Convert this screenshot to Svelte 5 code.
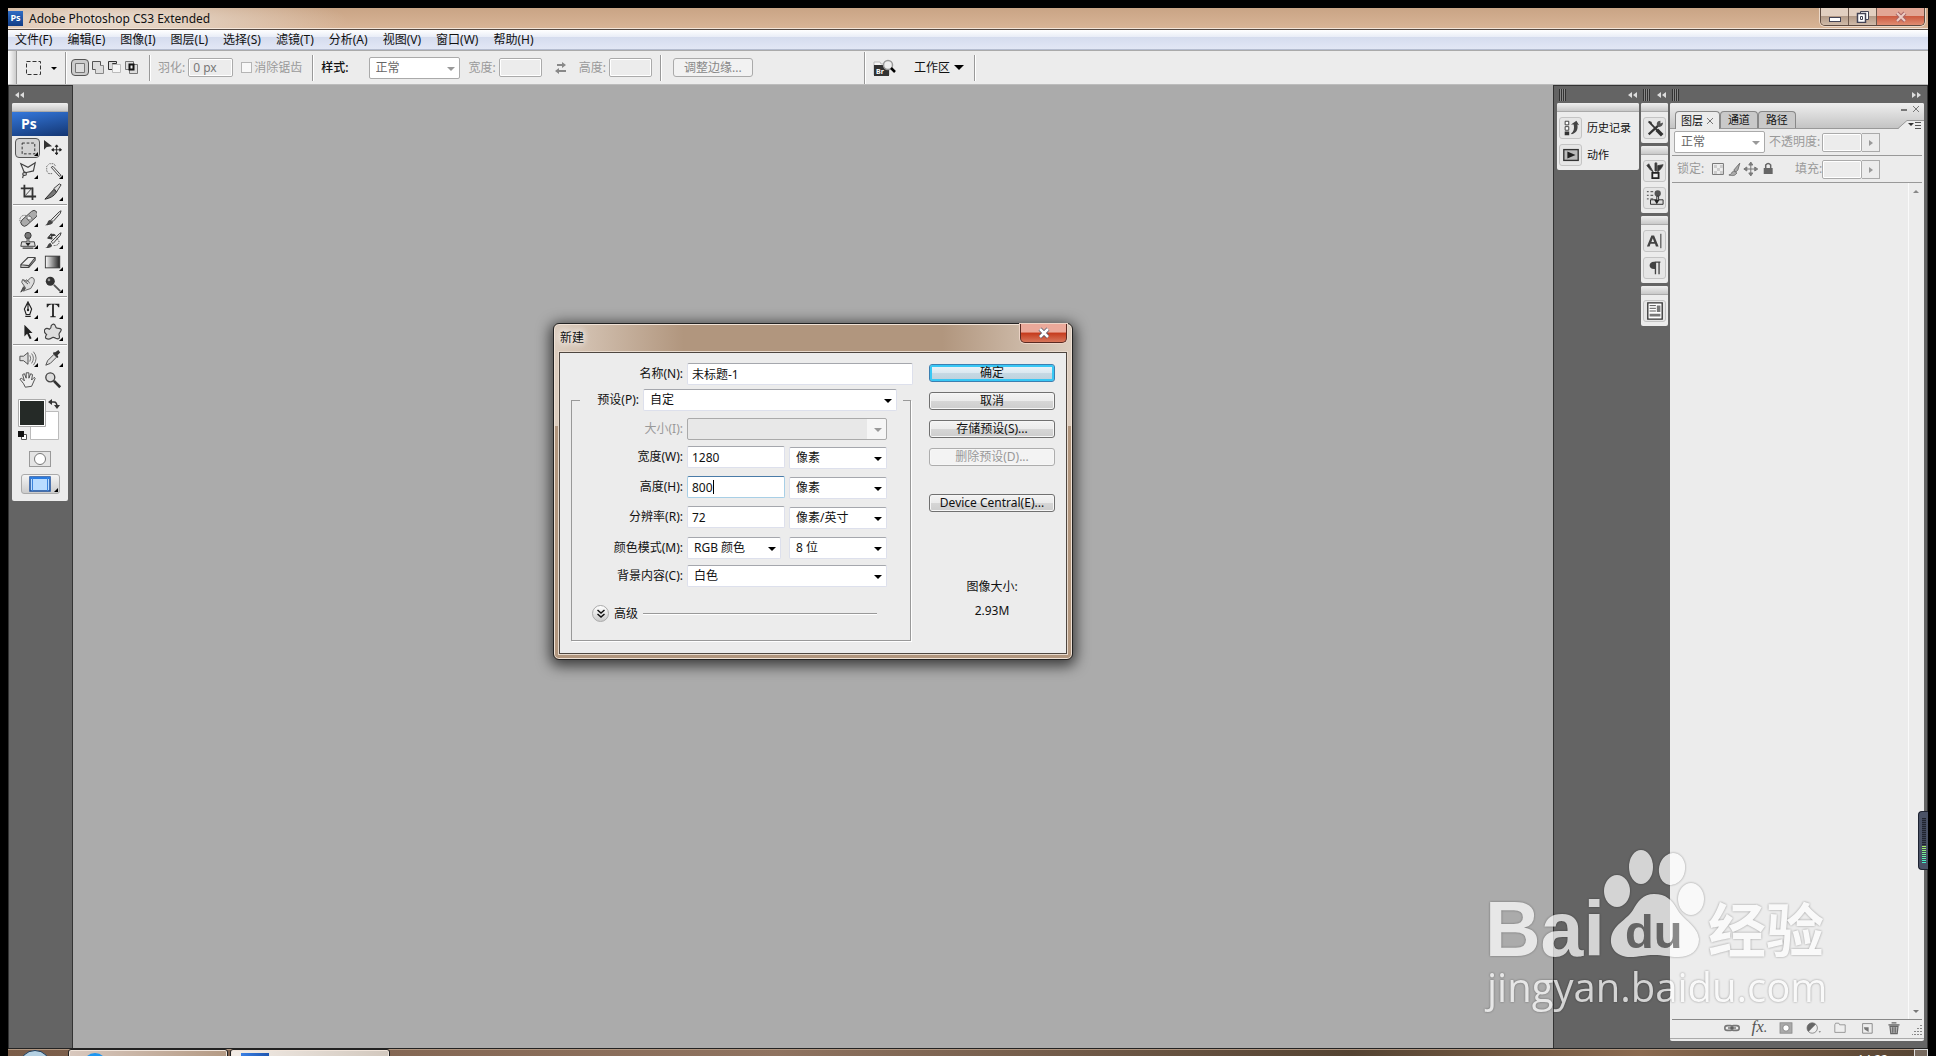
<script lang="ts">
	const menus = ['文件(F)', '编辑(E)', '图像(I)', '图层(L)', '选择(S)', '滤镜(T)', '分析(A)', '视图(V)', '窗口(W)', '帮助(H)'];

	// each group is drawn as rows of two, with a rule between groups
	const toolGroups: string[][] = [
		['marquee', 'move', 'lasso', 'wand', 'crop', 'slice'],
		['heal', 'brush', 'stamp', 'history', 'eraser', 'gradient', 'smudge', 'dodge'],
		['pen', 'type', 'select', 'shape'],
		['audio', 'eyedropper', 'hand', 'zoom']
	];
	const plain = ['move', 'crop', 'hand', 'zoom'];
	const stripGroups: string[][] = [['presets'], ['brushes', 'clone'], ['character', 'paragraph'], ['comps']];
	const footerTools = ['link', 'fx', 'mask', 'adjust', 'folder', 'newlayer', 'trash'];

	let docName = $state('未标题-1');
	let width = $state('1280');
	let height = $state('800');
	let resolution = $state('72');

	const icons: Record<string, string> = {
		marquee: '<rect x="3.5" y="4.5" width="14" height="12" fill="none" stroke="#222" stroke-dasharray="3 2"/>',
		move: '<path d="M0 1v11l3-3 6-1z" fill="#333"/><path d="M14 7v10M9 12h10M12.500 8.500l1.500-2 1.500 2zM12.500 15.500l1.500 2 1.500-2zM10.500 10.500l-2 1.500 2 1.500zM17.500 10.500l2 1.500-2 1.500z" stroke="#222" fill="#222"/>',
		lasso: '<path d="M6 13L2 3l8 4 8-5-2 9-9 2c-3-1-4 3-1 3s3-3 0-4M5 15l-1 4" fill="none" stroke="#444" stroke-width="1.300"/>',
		wand: '<path d="M9 14H5l-2-3V6l3-3h5l2 3" fill="none" stroke="#444" stroke-dasharray="1 1"/><path d="M8 7l9 10 2-1-9-10z" fill="#eee" stroke="#333"/>',
		crop: '<path d="M6 2v13h13M2 6h13v13" fill="none" stroke="#333" stroke-width="2"/><path d="M7 14l8-9" stroke="#444"/>',
		slice: '<path d="M1 18L11 7l3 3c-3 5-8 7-13 8z" fill="#777" stroke="#222"/><path d="M11 6l6-5 2 1-5 8z" fill="#ddd" stroke="#333"/>',
		heal: '<circle cx="6" cy="12" r="5" fill="none" stroke="#444" stroke-dasharray="1 1"/><rect x="0" y="6.500" width="22" height="8" rx="4" transform="rotate(-42 11 10)" fill="#aaa" stroke="#444"/><path d="M8 10l4 4M11 7l4 4" stroke="#555"/><path d="M10 10h3" stroke="#eee" stroke-width="2"/>',
		brush: '<path d="M1 18c4-1 2-5 6-6l3 3c-2 3-5 3-9 3z" fill="#444"/><path d="M8 12l9-9 2-1-1 3-8 9z" fill="#ddd" stroke="#333"/>',
		stamp: '<circle cx="10" cy="5" r="3.500" fill="#777" stroke="#333"/><path d="M9 8h2v4h6l1 5H2l1-5h6z" fill="#ddd" stroke="#333"/><path d="M7 13h6l-3 4z" fill="#222"/><path d="M4 19h12" stroke="#333" stroke-width="1.500"/>',
		history: '<path d="M1 19c4-1 2-4 6-6l2 3c-1 3-5 3-8 3z" fill="#444"/><path d="M8 12l9-9 2-1-1 3-8 9z" fill="#ddd" stroke="#333"/><path d="M5 7c3-4 6-4 8-2M8 3L4 8l5 1z" stroke="#333" fill="#333"/><path d="M14 8c6 5 1 9-4 8" fill="none" stroke="#333" stroke-dasharray="1 1"/>',
		eraser: '<path d="M2 13l8-8h8l-7 9zM2 13v3h9l7-8V5M11 14v2" fill="#eee" stroke="#444" stroke-width="1.200" stroke-linejoin="round"/>',
		gradient: '<defs><linearGradient id="tool-gradient"><stop offset="0" stop-color="#fff"/><stop offset="1" stop-color="#222"/></linearGradient></defs><rect x="1.500" y="3.500" width="16" height="13" fill="url(#tool-gradient)" stroke="#333"/>',
		smudge: '<path d="M5 18l2-4-4-6 1-3 5 2 4-4c4-1 5 3 3 7l-3 5-6 2z" fill="#ddd" stroke="#555"/><path d="M2 19l3-6 2 2zM5 6l5 4M8 5l4 4" stroke="#444" fill="#555"/>',
		dodge: '<circle cx="7" cy="7" r="5" fill="#333"/><circle cx="5.500" cy="5.500" r="1.500" fill="#999"/><path d="M11 11l7 7" stroke="#555" stroke-width="2"/>',
		pen: '<path d="M10 1l4 8-2 6H8L6 9zM7 17h6M10 3v7" fill="#eee" stroke="#222" stroke-width="1.300"/><circle cx="10" cy="10" r="1.300" fill="#222"/>',
		type: '<path d="M3 3h14v4h-1q-1-3-4-3h-1v12q0 1 2 1v1H7v-1q2 0 2-1V4H8Q5 4 4 7H3z" fill="#222"/>',
		select: '<path d="M6 2v13l3-3 3 6 2-1-3-6h4z" fill="#222"/>',
		shape: '<path d="M8 3q3-4 5 1 0 2 3 2 5 0 2 4-2 2-1 4 1 5-4 3-3-2-5 0-3 2-6 0-1-2 1-4-4-3-2-6 2-2 5 0 2-1 2-4z" fill="#ddd" stroke="#444" stroke-linejoin="round" stroke-width="1.300"/>',
		audio: '<path d="M1 8h4l5-4v13l-5-4H1z" fill="#ddd" stroke="#444"/><path d="M12 7q2 3 0 7M14 5q4 5 0 11M16 3q6 7 0 15" fill="none" stroke="#666"/>',
		eyedropper: '<path d="M2 18l2-5 7-7 3 3-7 7z" fill="#ddd" stroke="#444"/><path d="M10 5l5 5 1-1-1-2 3-3-2-3-4 3-1-1z" fill="#333"/>',
		hand: '<path d="M7 18l-2-4-4-5 2-1 3 3-2-7 2-1 2 5V2h3v6l2-5 2 1-1 6 3-3 1 1-4 9z" fill="#eee" stroke="#444"/>',
		zoom: '<circle cx="7" cy="7" r="5" fill="#ddd" stroke="#444" stroke-width="1.500"/><path d="M11 11l7 7" stroke="#333" stroke-width="3"/>',
		actions: '<rect x="2" y="4" width="16" height="12" fill="#bbb" stroke="#333" stroke-width="1.500"/><path d="M6 6l9 4-9 4z" fill="#222"/>',
		historypanel: '<path d="M3.500 2.500h4v4h-4zM3.500 8.500h4v4h-4z" fill="#fff" stroke="#333"/><path d="M3 14h5v4H3z" fill="#333"/><path d="M11 17c6-2 7-7 6-11l2 1-3-5-6 4 3 0c1 5 0 8-3 10z" fill="#444"/>',
		presets: '<path d="M3 3l14 14" stroke="#333" stroke-width="2"/><path d="M12 12l6 6" stroke="#333" stroke-width="4"/><path d="M3 17L15 6" stroke="#333" stroke-width="2.500"/><path d="M19 4l-3 1V2c-4 0-5 4-3 6s6 0 6-4z" fill="#555"/><path d="M2 2l4 1 1 3z" fill="#333"/>',
		brushes: '<path d="M7 12h7v6H7z" fill="#eee" stroke="#222" stroke-width="2"/><path d="M8 11L3 2 1 4l4 5zM10 10V1h2v9zM13 11l4-4 2-4-6 1z" fill="#333" stroke="#444"/>',
		clone: '<path d="M1 3h2M1 7h2M1 11h2M5 3h3M5 7h3M5 11h3" stroke="#333"/><circle cx="13" cy="5" r="3.500" fill="#555"/><path d="M12 8h2v4h5v5H5v-5h7z" fill="#ddd" stroke="#222"/><path d="M9 12h6l-3 5z" fill="#222"/>',
		character: '<path d="M1 16L6 4h3l5 12h-3l-1-3H5l-1 3zM6 11h3L7.500 7z" fill="#444" fill-rule="evenodd"/><path d="M16.500 2v16" stroke="#222"/>',
		paragraph: '<path d="M10 3v8c-8 1-8-9 0-8z" fill="#444"/><path d="M10 3.500h6M10.500 3v14M14.500 3v14" stroke="#444" stroke-width="1.500"/>',
		comps: '<path d="M2 1h16v18H2z" fill="#fff" stroke="#333" stroke-width="1.500"/><path d="M4 4h7M4 7h7M4 10h7" stroke="#444"/><path d="M12 4h4v7h-4zM4 13h12v3H4z" fill="#777"/>',
		link: '<rect x="1" y="7" width="10" height="6" rx="3" fill="none" stroke="#777" stroke-width="2"/><rect x="9" y="7" width="10" height="6" rx="3" fill="none" stroke="#777" stroke-width="2"/><path d="M5 10h10" stroke="#444" stroke-width="1.500"/>',
		mask: '<rect x="2.500" y="3.500" width="15" height="13" fill="#aaa" stroke="#888"/><circle cx="10" cy="10" r="4" fill="#fff" stroke="#777"/>',
		adjust: '<circle cx="9" cy="10" r="6.500" fill="#eee" stroke="#777"/><path d="M4.400 14.600A6.500 6.500 0 0 1 13.600 5.400z" fill="#666"/><path d="M17 14h3l-1.500 2z" fill="#777"/>',
		folder: '<path d="M3.500 15.500V6l1-2h4l1 2h7v9.500z" fill="#eee" stroke="#888"/>',
		newlayer: '<path d="M4.500 4.500h12v12h-12z" fill="#eee" stroke="#777"/><path d="M6 9h6v6l-5-3z" fill="#777"/>',
		trash: '<path d="M5 8h10l-1 9H6zM3 6h14M7 3.500h6" fill="#bbb" stroke="#666" stroke-width="1.500"/><path d="M8 9v7M10 9v7M12 9v7" stroke="#555"/>'
	};
</script>

{#snippet icon(name: string)}
	<svg class="icon" viewBox="0 0 20 20" aria-hidden="true">{@html icons[name]}</svg>
{/snippet}

{#snippet picker(id: string, value: string, disabled = false)}
	<span class="picker" class:disabled>
		<select {id} {disabled}><option>{value}</option></select>
	</span>
{/snippet}

{#snippet collapse(flip: boolean)}
	<svg class="collapse" class:flip viewBox="0 0 10 6" aria-hidden="true"><path d="M5 0v6L1 3zM10 0v6L6 3z" fill="#ddd" /></svg>
{/snippet}

{#snippet gripper()}
	<span class="gripper"></span>
{/snippet}

<div class="screen">
	<div class="app">
		<header class="titlebar">
			<span class="ps-mark">Ps</span>
			<span class="app-name">Adobe Photoshop CS3 Extended</span>
			<div class="window-buttons">
				<button aria-label="最小化"><svg viewBox="0 0 14 12"><rect x="1.500" y="6.500" width="11" height="4" fill="#fff" stroke="#445" /></svg></button>
				<button aria-label="还原"><svg viewBox="0 0 14 12"><path d="M4.500 .5h8v8h-8z" fill="#fff" stroke="#445" /><path d="M1.500 2.500h8v9h-8z" fill="#fff" stroke="#445" stroke-width="1.500" /><path d="M4.500 5.500h2v3h-2z" fill="none" stroke="#445" /></svg></button>
				<button class="close" aria-label="关闭"><svg viewBox="0 0 14 12"><path d="M3 2l8 8M11 2l-8 8" stroke="#a66" stroke-width="4" /><path d="M3 2l8 8M11 2l-8 8" stroke="#eccdc5" stroke-width="2" /></svg></button>
			</div>
		</header>

		<nav class="menubar">
			{#each menus as menu}
				<button>{menu}</button>
			{/each}
		</nav>

		<div class="options">
			<span class="bar-grip"></span>
			<button class="current-tool" aria-label="矩形选框">
				<svg viewBox="0 0 32 18" width="32" height="18"><path d="M1.500 2.500h14v13h-14z" fill="none" stroke="#333" stroke-dasharray="4 2" /><path d="M26 8h6l-3 3z" fill="#000" /></svg>
			</button>
			<span class="rule tall"></span>
			<div class="modes">
				<button class="on" aria-label="新选区"><svg viewBox="0 0 16 14"><path d="M3.500 2.500h9v9h-9z" fill="#ddd" stroke="#777" /></svg></button>
				<button aria-label="添加到选区"><svg viewBox="0 0 16 14"><path d="M2.500 .5h8v8h-8z" fill="#ddd" stroke="#555" /><path d="M5.500 4.500h8v8h-8z" fill="#ddd" stroke="#888" /><path d="M5 4h5v4H5z" fill="#ddd" /></svg></button>
				<button aria-label="从选区减去"><svg viewBox="0 0 16 14"><path d="M1.500 8.500v-8h8v2h-4v6z" fill="#ddd" stroke="#333" /><path d="M5.500 3.500h8v8h-8z" fill="#f6f6f6" stroke="#bbb" /></svg></button>
				<button aria-label="与选区交叉"><svg viewBox="0 0 16 14"><path d="M1.500 .5h8v8h-8zM5.500 3.500h8v9h-8z" fill="#ddd" stroke="#777" /><path d="M5.500 3.500h4v5h-4z" fill="#eee" stroke="#111" stroke-width="2" /></svg></button>
			</div>
			<span class="rule"></span>
			<label class="muted" for="feather">羽化:</label>
			<input id="feather" class="field feather" value="0 px" disabled />
			<label class="muted check"><input type="checkbox" disabled />消除锯齿</label>
			<span class="rule"></span>
			<label class="style-label" for="style">样式:</label>
			<div class="style-picker">{@render picker('style', '正常', true)}</div>
			<label class="muted" for="opt-width">宽度:</label>
			<input id="opt-width" class="field" disabled />
			<svg class="swap" viewBox="0 0 14 12" aria-hidden="true"><path d="M3 3h7M4 9h8" stroke="#888" stroke-width="2" /><path d="M8 0l4 3-4 3zM5 6L1 9l4 3z" fill="#888" /></svg>
			<label class="muted" for="opt-height">高度:</label>
			<input id="opt-height" class="field" disabled />
			<span class="rule"></span>
			<button class="refine" disabled>调整边缘...</button>
			<span class="rule tall bridge-rule"></span>
			<button class="bridge" aria-label="Bridge">
				<svg viewBox="0 0 24 18" width="24" height="18"><path d="M1 3h6l1 2h8v11H1z" fill="#f8f8f8" stroke="#bbb" /><path d="M1 6h15v11H1z" fill="#333" /><circle cx="15" cy="6" r="4.500" fill="#eee" stroke="#999" stroke-width="1.500" /><path d="M18 9l4 4" stroke="#000" stroke-width="2.500" /><text x="3" y="15" font-size="7" font-weight="700" fill="#fff">Br</text></svg>
			</button>
			<button class="workspace-menu">工作区<span class="caret"></span></button>
			<span class="rule"></span>
		</div>

		<main class="workspace">
			<aside class="dock tools-dock">
				<div class="dock-head">{@render collapse(false)}</div>
				<div class="panel tools">
					<div class="panel-grip"></div>
					<div class="ps-banner">Ps</div>
					{#each toolGroups as group, i}
						{#if i > 0}<hr />{/if}
						<div class="tool-grid">
							{#each group as tool}
								<button class="tool" class:active={tool === 'marquee'} class:more={!plain.includes(tool)} aria-label={tool}>
									{@render icon(tool)}
								</button>
							{/each}
						</div>
					{/each}
					<div class="swatches">
						<svg viewBox="0 0 44 44" width="44" height="44" aria-hidden="true">
							<path d="M12.500 12.500h28v28h-28z" fill="#fff" stroke="#bbb" />
							<path d="M.5 .5h27v27H.5z" fill="#fff" stroke="#aaa" />
							<path d="M2 2h24v24H2z" fill="#252a27" />
							<path d="M33 3h3q3 0 3 5" fill="none" stroke="#333" stroke-width="1.500" /><path d="M34 0v6l-4-3zM36 6h6l-3 4z" fill="#333" />
							<path d="M3.500 35.500h5v5h-5z" fill="#fff" stroke="#555" /><path d="M0 32h6v6H0z" fill="#111" />
						</svg>
					</div>
					<button class="quick-mask" aria-label="快速蒙版"><svg viewBox="0 0 20 14"><circle cx="10" cy="7" r="5.500" fill="#fff" stroke="#777" /></svg></button>
					<button class="screen-mode more" aria-label="屏幕模式"><svg viewBox="0 0 22 16"><path d="M1 1h20v14H1z" fill="#b9dcff" stroke="#1b4f9c" stroke-width="1.500" /><path d="M1 2h20" stroke="#2a7be0" stroke-width="2" /><path d="M3.500 1v14M18.500 1v14" stroke="#3b84dd" /></svg></button>
				</div>
			</aside>

			<section class="canvas">
				<form class="dialog" onsubmit={(e) => e.preventDefault()}>
					<div class="dialog-title">
						<h2>新建</h2>
						<button type="button" class="dialog-close" aria-label="关闭"><svg viewBox="0 0 14 12"><path d="M3 2l8 8M11 2l-8 8" stroke="#556" stroke-width="4" /><path d="M3 2l8 8M11 2l-8 8" stroke="#fff" stroke-width="2.500" /></svg></button>
					</div>
					<div class="dialog-body">
						<div class="settings">
							<div class="line name-line">
								<label for="doc-name">名称(N):</label>
								<input id="doc-name" bind:value={docName} />
							</div>
							<fieldset>
								<legend>
									<label for="preset">预设(P):</label>
									{@render picker('preset', '自定')}
								</legend>
								<div class="line size-line">
									<label for="size">大小(I):</label>
									<div class="wide">{@render picker('size', '', true)}</div>
								</div>
								<div class="line measure">
									<label for="width">宽度(W):</label>
									<div><input id="width" bind:value={width} /></div>
									{@render picker('width-unit', '像素')}
								</div>
								<div class="line measure">
									<label for="height">高度(H):</label>
									<div class="focused"><input id="height" bind:value={height} /><i></i></div>
									{@render picker('height-unit', '像素')}
								</div>
								<div class="line measure">
									<label for="resolution">分辨率(R):</label>
									<div><input id="resolution" bind:value={resolution} /></div>
									{@render picker('resolution-unit', '像素/英寸')}
								</div>
								<div class="line">
									<label for="mode">颜色模式(M):</label>
									<div class="mode">{@render picker('mode', 'RGB 颜色')}</div>
									{@render picker('depth', '8 位')}
								</div>
								<div class="line last">
									<label for="background">背景内容(C):</label>
									<div class="wide">{@render picker('background', '白色')}</div>
								</div>
								<div class="advanced">
									<button type="button" aria-label="展开高级"><svg viewBox="0 0 10 10"><path d="M1.500 1l3.500 3 3.500-3M1.500 5l3.500 3 3.500-3" fill="none" stroke="#111" stroke-width="1.500" /></svg></button>
									<span>高级</span>
									<hr />
								</div>
							</fieldset>
						</div>
						<div class="actions">
							<button class="default">确定</button>
							<button type="button">取消</button>
							<button type="button">存储预设(S)...</button>
							<button type="button" disabled>删除预设(D)...</button>
							<button type="button" class="device">Device Central(E)...</button>
							<p class="size-info">图像大小:<br />2.93M</p>
						</div>
					</div>
				</form>
			</section>

			<aside class="dock right-dock">
				<div class="history-col">
					<div class="dock-head">{@render gripper()}{@render collapse(false)}</div>
					<div class="panel">
						<div class="panel-grip"></div>
						<button class="entry"><span class="tile">{@render icon('historypanel')}</span>历史记录</button>
						<button class="entry"><span class="tile">{@render icon('actions')}</span>动作</button>
					</div>
				</div>
				<div class="strip-col">
					<div class="dock-head">{@render gripper()}{@render collapse(false)}</div>
					{#each stripGroups as group}
						<div class="panel">
							<div class="panel-grip"></div>
							{#each group as name}
								<button class="entry" aria-label={name}><span class="tile">{@render icon(name)}</span></button>
							{/each}
						</div>
					{/each}
				</div>
				<div class="layers-col">
					<div class="dock-head">{@render gripper()}{@render collapse(true)}</div>
					<div class="panel layers">
						<div class="tabs">
							<button class="tab current">图层 <svg viewBox="0 0 8 8" width="8" height="8"><path d="M1 1l6 6M7 1L1 7" stroke="#777" /></svg></button>
							<button class="tab">通道</button>
							<button class="tab">路径</button>
							<svg class="panel-menu" viewBox="0 0 26 26" aria-hidden="true"><path d="M3 7h6" stroke="#777" stroke-width="2" /><path d="M15 3l6 6M21 3l-6 6" stroke="#777" /><path d="M0 26l9-8.500h17V26z" fill="#ececec" /><path d="M0 25.500l9-8h17" fill="none" stroke="#999" /><path d="M10 20h6l-3 3z" fill="#333" /><path d="M17 19.500h6M17 22.500h6M17 25.500h6" stroke="#555" /></svg>
						</div>
						<div class="layer-row">
							<div class="blend">{@render picker('blend', '正常', true)}</div>
							<label class="muted" for="opacity">不透明度:</label>
							<input id="opacity" class="field" disabled /><button class="step" disabled aria-label="不透明度"><svg viewBox="0 0 4 6" width="4" height="6"><path d="M0 0l4 3-4 3z" fill="#999" /></svg></button>
						</div>
						<div class="layer-row">
							<span class="muted lock-label">锁定:</span>
							<svg class="locks" viewBox="0 0 64 16" aria-hidden="true"><path d="M1.500 2.500h11v11h-11z" fill="#eee" stroke="#777" /><path d="M3 4h3v3H3zM9 4h3v3H9zM6 7h3v3H6zM3 10h3v3H3zM9 10h3v3H9z" fill="#ccc" /><path d="M18 14c3 0 2-3 5-4l3 2c-2 3-4 3-8 2zM23 9l6-7-2 7-2 2z" fill="#aaa" stroke="#777" /><path d="M40 2v12M34 8h12M38 4l2-3 2 3zM38 12l2 3 2-3zM36 6l-3 2 3 2zM44 6l3 2-3 2z" fill="#888" stroke="#777" /><path d="M53 7h9v6h-9z" fill="#666" /><path d="M55 7V4q2.500-3 5 0v3" fill="none" stroke="#666" stroke-width="1.500" /></svg>
							<label class="muted" for="fill">填充:</label>
							<input id="fill" class="field" disabled /><button class="step" disabled aria-label="填充"><svg viewBox="0 0 4 6" width="4" height="6"><path d="M0 0l4 3-4 3z" fill="#999" /></svg></button>
						</div>
						<div class="layer-list">
							<div class="scroll"><span class="up"></span><span class="down"></span></div>
						</div>
						<div class="layer-footer">
							{#each footerTools as name}
								<button aria-label={name}>
									{#if name === 'fx'}<em>fx<small>.</small></em>{:else}{@render icon(name)}{/if}
								</button>
							{/each}
							<svg class="resize" viewBox="0 0 10 10" aria-hidden="true"><path d="M9 0v10M6 3v7M3 6v4M0 9v1" stroke="#888" stroke-width="2" stroke-dasharray="1 2" /></svg>
						</div>
					</div>
				</div>
			</aside>
		</main>

		<footer class="taskbar">
			<span class="orb"></span>
			<span class="task"><i class="round"></i></span>
			<span class="task bright"><i></i></span>
			<time>14:22</time>
			<span class="peek"></span>
		</footer>

		<div class="meter"><span></span></div>

		<svg class="watermark" viewBox="0 0 350 180" aria-hidden="true">
			<g fill="#fff">
				<text class="logo" x="0" y="106" font-size="77">Bai</text>
				<path fill-rule="evenodd" d="M169 44c-11 0-16 7-21 16-6 10-21 15-22 29-1 11 8 18 19 18 9 0 15-2 24-2s15 2 24 2c13 0 21-7 21-18-1-13-16-19-22-30-5-9-11-15-23-15z" />
				<ellipse cx="132" cy="41" rx="13" ry="16" />
				<ellipse cx="156" cy="17" rx="12" ry="17" />
				<ellipse cx="187" cy="19" rx="13" ry="16" transform="rotate(12 187 19)" />
				<ellipse cx="206" cy="49" rx="13" ry="16" />
				<text class="cjk" x="223" y="102" font-size="58">经验</text>
				<text class="url" x="2" y="152" font-size="40">jingyan.baidu.com</text>
			</g>
			<text class="logo du" x="140" y="98" font-size="47">du</text>
		</svg>
	</div>
</div>

<style>
	:global(body) {
		background: #000;
	}

	.screen {
		box-sizing: border-box;
		height: 100vh;
		padding: 8px 8px 0;
		background: #000;
		font: 12px/16px 'Noto Sans', 'Noto Sans CJK SC', sans-serif;
		color: #111;
	}

	.screen *,
	.screen *::before,
	.screen *::after {
		box-sizing: border-box;
	}

	.app {
		position: relative;
		display: flex;
		flex-direction: column;
		height: 100%;
		overflow: hidden;
	}

	button,
	input,
	select {
		margin: 0;
		padding: 0;
		border: 0;
		font: inherit;
		color: inherit;
		background: none;
	}

	button {
		white-space: nowrap;
	}

	label,
	.muted {
		white-space: nowrap;
	}

	.muted {
		color: #9a9a9a;
	}

	.icon {
		display: block;
		width: 20px;
		height: 20px;
	}

	/* title and menus */
	.titlebar {
		display: flex;
		align-items: center;
		gap: 6px;
		height: 21px;
		flex-shrink: 0;
		background: radial-gradient(ellipse 240px 30px at 100px 12px, #eadfd4, transparent), linear-gradient(#c9a485, #d8b496);
		border-bottom: 1px solid #f4e6da;
	}

	.app-name {
		padding-top: 1px;
	}

	.ps-mark {
		width: 15px;
		height: 15px;
		background: linear-gradient(#2f6cc4, #123d86);
		color: #fff;
		font-size: 9px;
		font-weight: 700;
		line-height: 14px;
		text-align: center;
	}

	.window-buttons {
		display: flex;
		align-self: flex-start;
		margin-left: auto;
		margin-right: 3px;
		border: 1px solid #5d4a40;
		border-top: 0;
		border-radius: 0 0 5px 5px;
		overflow: hidden;
		box-shadow: 0 0 0 1px #ecd9ca;
	}

	.window-buttons button {
		display: grid;
		place-items: center;
		width: 28px;
		height: 17px;
		background: linear-gradient(#e2cfc0 48%, #b39a87 50%, #d0bba9);
		border-right: 1px solid #6d584c;
	}

	.window-buttons svg {
		width: 14px;
		height: 12px;
	}

	.window-buttons .close {
		width: 47px;
		border: 0;
		background: linear-gradient(#e2a695 48%, #cc5b41 50%, #e08d72);
	}

	.menubar {
		display: flex;
		gap: 15px;
		align-items: center;
		height: 21px;
		flex-shrink: 0;
		padding-left: 7px;
		border-top: 1px solid #554a44;
		border-bottom: 1px solid #b4bccf;
		background: linear-gradient(#fff, #e9edf7 36%, #d5dcee 38%, #e2e7f5);
	}

	/* options bar */
	.options {
		display: flex;
		align-items: center;
		height: 35px;
		flex-shrink: 0;
		border-top: 1px solid #aaa;
		border-bottom: 1px solid #bcbcbc;
		background: #ececec;
	}

	.bar-grip {
		align-self: stretch;
		width: 9px;
		border-right: 1px solid #999;
		background: linear-gradient(90deg, #fff, #ccc);
	}

	.current-tool {
		height: 18px;
		margin: 0 8px 0 8px;
	}

	.rule {
		width: 2px;
		height: 26px;
		flex-shrink: 0;
		border-left: 1px solid #999;
		border-right: 1px solid #fff;
	}

	.rule.tall {
		height: 32px;
	}

	.modes {
		display: flex;
		margin: 0 9px 0 4px;
	}

	.modes button {
		display: grid;
		place-items: center;
		width: 17px;
		height: 17px;
	}

	.modes svg {
		width: 16px;
		height: 14px;
	}

	.modes .on {
		width: 18px;
		border: 1px solid #555;
		border-radius: 4px;
		background: #ccc;
	}

	.options .rule + label {
		margin-left: 7px;
	}

	.field {
		width: 43px;
		height: 19px;
		border: 1px solid #aaa;
		border-radius: 2px;
		background: #ececec;
		color: #777;
		outline: 1px solid #fff;
		outline-offset: -2px;
	}

	.options .field {
		margin-left: 3px;
	}

	.options .feather {
		width: 45px;
		margin-right: 8px;
		padding-left: 4px;
	}

	.check {
		display: flex;
		align-items: center;
		gap: 2px;
		margin-right: 10px;
	}

	.check input {
		appearance: none;
		width: 11px;
		height: 11px;
		border: 1px solid #b5b5b5;
		background: #f8f8f8;
	}

	.style-label {
		margin-right: 20px;
		font-weight: 500;
	}

	.style-picker {
		width: 91px;
		margin-right: 9px;
	}

	.swap {
		width: 14px;
		height: 12px;
		margin: 0 11px 0 12px;
	}

	.field + .rule {
		margin-left: 8px;
	}

	.refine {
		width: 80px;
		height: 19px;
		margin: 0 111px 0 11px;
		border: 1px solid #aaa;
		border-radius: 3px;
		background: #f2f2f2;
		color: #888;
		line-height: 16px;
	}

	.bridge {
		height: 18px;
		margin: 0 17px 0 7px;
	}

	.bridge text {
		font-family: 'Noto Sans', sans-serif;
	}

	.workspace-menu {
		display: flex;
		align-items: center;
		gap: 4px;
		margin-right: 10px;
	}

	.caret {
		border: 5px solid transparent;
		border-top-color: #000;
		border-bottom: 0;
	}

	/* select with a drawn arrow */
	.picker {
		position: relative;
		display: block;
		height: 22px;
		border: 1px solid #dde0ec;
		border-top-color: #a5a7ad;
		border-radius: 2px;
		background: #fff;
	}

	.picker select {
		appearance: none;
		width: 100%;
		height: 20px;
		padding: 0 20px 0 6px;
		line-height: 20px;
		opacity: 1;
	}

	.picker::after {
		content: '';
		position: absolute;
		right: 4px;
		top: 9px;
		border: 4px solid transparent;
		border-top-color: #000;
		border-bottom: 0;
		pointer-events: none;
	}

	.picker.disabled {
		border-color: #aaa;
		color: #666;
	}

	.picker.disabled::after {
		border-top-color: #999;
	}

	/* docks */
	.workspace {
		display: flex;
		flex: 1;
		min-height: 0;
	}

	.dock {
		background: #646464;
		border: 1px solid #333;
		border-bottom: 0;
	}

	.dock-head {
		display: flex;
		align-items: center;
		justify-content: space-between;
		height: 17px;
		flex-shrink: 0;
		padding: 0 2px;
	}

	.collapse {
		width: 10px;
		height: 6px;
	}

	.flip {
		transform: scaleX(-1);
	}

	.gripper {
		width: 7px;
		height: 12px;
		background: repeating-linear-gradient(90deg, #333 0 1px, #888 1px 2px);
	}

	.panel {
		border-radius: 2px;
		overflow: hidden;
		background: #ececec;
	}

	.panel-grip {
		height: 9px;
		border-bottom: 1px solid #aaa;
		background: linear-gradient(#efefef, #c8c8c8);
	}

	.tools-dock {
		width: 65px;
		padding: 0 4px 0 3px;
	}

	.tools {
		display: flex;
		flex-direction: column;
		align-items: center;
		height: 398px;
	}

	.tools > * {
		flex-shrink: 0;
	}

	.tools .panel-grip,
	.ps-banner {
		width: 100%;
	}

	.ps-banner {
		height: 24px;
		margin-bottom: 1px;
		padding-left: 9px;
		background: linear-gradient(170deg, #3478dc, #143672);
		color: #fff;
		font: 700 14px/24px 'Open Sans', sans-serif;
	}

	.tool-grid {
		display: grid;
		grid-template-columns: 25px 25px;
		grid-auto-rows: 22px;
	}

	.tools hr {
		width: 54px;
		height: 2px;
		margin: 1px 0;
		border: 0;
		border-top: 1px solid #999;
		background: #fff;
	}

	.tool {
		position: relative;
		display: grid;
		place-items: center;
		border: 1px solid transparent;
	}

	.tool.active {
		height: 20px;
		align-self: center;
		border-color: #555;
		border-radius: 4px;
		background: #d2d2d2;
	}

	.tool .icon {
		width: 18px;
		height: 18px;
	}

	.more::after {
		content: '';
		position: absolute;
		right: 1px;
		bottom: 1px;
		border: 2px solid #000;
		border-top-color: transparent;
		border-left-color: transparent;
	}

	.swatches {
		height: 44px;
		margin-top: 8px;
	}

	.quick-mask {
		display: grid;
		place-items: center;
		width: 22px;
		height: 16px;
		margin: 8px 0 7px;
		border: 1px solid #999;
		background: #e4e4e4;
	}

	.quick-mask svg {
		width: 20px;
		height: 14px;
	}

	.screen-mode {
		position: relative;
		display: grid;
		place-items: center;
		width: 39px;
		height: 20px;
		border: 1px solid #aaa;
		border-radius: 3px;
		background: linear-gradient(#f5f5f5, #ccc);
	}

	.screen-mode svg {
		width: 22px;
		height: 16px;
	}

	.right-dock {
		display: flex;
		gap: 2px;
		padding: 0 3px;
	}

	.history-col {
		width: 82px;
	}

	.strip-col {
		width: 27px;
	}

	.layers-col {
		display: flex;
		flex-direction: column;
		width: 254px;
	}

	.strip-col .panel + .panel {
		margin-top: 3px;
	}

	.entry {
		display: flex;
		align-items: center;
		gap: 5px;
		margin: 5px 2px 4px;
		font-size: 11px;
	}

	.tile {
		display: grid;
		place-items: center;
		width: 23px;
		height: 22px;
		border: 1px solid #c4c4c4;
		border-radius: 3px;
		background: #e6e6e6;
	}

	.tile .icon {
		width: 18px;
		height: 18px;
	}

	.layers {
		display: flex;
		flex: 1;
		flex-direction: column;
		margin-bottom: 7px;
		padding-bottom: 2px;
	}

	.tabs {
		display: flex;
		align-items: flex-end;
		height: 26px;
		padding-left: 5px;
		border-bottom: 1px solid #999;
		background: linear-gradient(#eee, #c4c4c4);
	}

	.tab {
		height: 17px;
		padding: 0 7px;
		border: 1px solid #888;
		border-bottom: 0;
		border-radius: 4px 4px 0 0;
		background: #c9c9c9;
		font-size: 11px;
		line-height: 16px;
	}

	.tab.current {
		height: 18px;
		margin-bottom: -1px;
		padding: 0 5px;
		background: #ececec;
	}

	.panel-menu {
		width: 26px;
		height: 26px;
		margin: 0 0 -1px auto;
	}

	.layer-row {
		display: flex;
		align-items: center;
		height: 27px;
		margin: 0 2px;
		padding-left: 2px;
		border-bottom: 1px solid #999;
	}

	.blend {
		width: 91px;
		margin-right: 4px;
	}

	.layer-row .field {
		width: 40px;
		margin-left: auto;
	}

	.step {
		width: 18px;
		height: 19px;
		margin-right: 42px;
		border: 1px solid #aaa;
		border-left: 0;
		line-height: 10px;
	}

	.lock-label {
		padding-left: 3px;
	}

	.locks {
		width: 64px;
		height: 16px;
		margin: 0 20px 0 7px;
	}

	.layer-list {
		display: flex;
		flex: 1;
		justify-content: flex-end;
		margin: 0 2px;
		border-bottom: 1px solid #888;
	}

	.scroll {
		display: flex;
		flex-direction: column;
		align-items: center;
		justify-content: space-between;
		width: 14px;
		padding: 7px 0 6px;
		border-left: 1px solid #fafafa;
	}

	.up,
	.down {
		border: 3px solid transparent;
	}

	.up {
		border-top: 0;
		border-bottom-color: #888;
	}

	.down {
		border-bottom: 0;
		border-top-color: #777;
	}

	.layer-footer {
		display: flex;
		height: 19px;
		padding-left: 49px;
		border-bottom: 1px solid #aaa;
	}

	.layer-footer button {
		width: 27px;
		height: 16px;
		padding: 0 4px;
	}

	.layer-footer .icon {
		width: 18px;
		height: 16px;
	}

	.layer-footer em {
		font: italic 17px/14px 'Liberation Serif', serif;
		color: #555;
	}

	.resize {
		align-self: flex-end;
		width: 10px;
		height: 10px;
		margin: 0 2px 3px auto;
	}

	/* new document dialog */
	.canvas {
		display: flex;
		flex: 1;
		align-items: flex-start;
		justify-content: center;
		min-width: 0;
		padding-top: 238px;
		background: #ababab;
	}

	.dialog {
		width: 520px;
		padding: 0 5px 5px;
		border: 1px solid #222;
		border-radius: 6px;
		background: linear-gradient(90deg, #dccdbf, transparent 25%, transparent 75%, #dccdbf) 0 0 / 100% 102px no-repeat, #b1967e;
		box-shadow: inset 0 0 0 1px #f0e2d6, 0 3px 14px 3px rgba(0, 0, 0, 0.65);
	}

	.dialog-title {
		display: flex;
		justify-content: space-between;
		height: 28px;
	}

	.dialog-title h2 {
		margin: 0;
		padding-left: 1px;
		font-size: 12px;
		font-weight: 400;
		line-height: 27px;
		text-shadow: 0 0 6px #fff, 0 0 8px #fff;
	}

	.dialog-close {
		display: grid;
		place-items: center;
		width: 47px;
		height: 19px;
		border: 1px solid #5a2a22;
		border-top: 0;
		border-radius: 0 0 5px 5px;
		background: linear-gradient(#eba99a 45%, #c53a1c 50%, #d8765b);
		box-shadow: 0 0 0 1px #ecd3c6;
	}

	.dialog-close svg {
		width: 14px;
		height: 12px;
	}

	.dialog-body {
		display: flex;
		justify-content: space-between;
		height: 302px;
		padding: 10px 11px 0;
		border: 1px solid #4e4640;
		background: #ececec;
		box-shadow: 0 0 0 1px #e8dacd;
	}

	.settings {
		width: 342px;
	}

	.line {
		display: grid;
		grid-template-columns: 103px 98px 98px;
		gap: 4px;
		align-items: center;
		height: 30px;
	}

	.line label {
		text-align: right;
	}

	.line input {
		display: block;
		width: 98px;
		height: 22px;
		padding-left: 4px;
		border: 1px solid #dde0ec;
		border-top-color: #a5a7ad;
		border-radius: 2px;
		background: #fff;
	}

	.name-line {
		grid-template-columns: 112px 226px;
		height: 22px;
	}

	.name-line input {
		width: 100%;
	}

	.size-line {
		height: 28px;
	}

	.size-line label {
		color: #9a9a9a;
	}

	/* text boxes ride slightly above the unit lists */
	.measure label,
	.measure div {
		padding-bottom: 2px;
	}

	.wide {
		grid-column: 2 / 4;
	}

	.wide .picker.disabled {
		background: linear-gradient(90deg, #e8e8e8 calc(100% - 19px), #f6f6f6 0);
	}

	.mode {
		width: 94px;
	}

	.line.last {
		height: 26px;
	}

	.focused {
		position: relative;
	}

	.focused input {
		border-color: #4a7ba8 #a8cfe6 #a8cfe6;
	}

	.focused i {
		position: absolute;
		left: 26px;
		top: 4px;
		width: 1px;
		height: 14px;
		background: #000;
	}

	fieldset {
		min-width: 0;
		height: 252px;
		margin: 4px 2px 0 0;
		padding: 4px 0 0 8px;
		border: 1px solid #999;
		box-shadow: 1px 1px 0 #fff;
	}

	legend {
		display: grid;
		grid-template-columns: 59px 254px;
		gap: 4px;
		align-items: center;
		padding: 0 6px 0 0;
	}

	legend label {
		text-align: right;
	}

	.advanced {
		display: flex;
		align-items: center;
		gap: 5px;
		margin: 16px 33px 0 12px;
	}

	.advanced button {
		display: grid;
		place-items: center;
		width: 17px;
		height: 17px;
		border: 1px solid #aaa;
		border-radius: 50%;
		background: linear-gradient(#fff, #ccc);
	}

	.advanced svg {
		width: 10px;
		height: 10px;
	}

	.advanced hr {
		flex: 1;
		height: 2px;
		margin: 0;
		border: 0;
		border-top: 1px solid #999;
		background: #fff;
	}

	.actions {
		display: flex;
		flex-direction: column;
		gap: 10px;
		width: 126px;
		padding-top: 1px;
	}

	.actions button {
		height: 18px;
		border: 1px solid #707070;
		border-radius: 3px;
		background: linear-gradient(#f3f3f3, #ebebeb 48%, #d6d6d6 52%, #cdcdcd);
		box-shadow: inset 0 0 0 1px #f6f6f6;
		line-height: 16px;
	}

	.actions .default {
		border-color: #3c7fb1;
		background: linear-gradient(#eef6fa, #dbe8f0 48%, #c6d9e4 52%, #bcd0dc);
		box-shadow: inset 0 0 0 2px #38c8f5;
	}

	.actions button:disabled {
		border-color: #adadad;
		background: #f3f3f3;
		color: #999;
	}

	.actions .device {
		margin-top: 18px;
	}

	.size-info {
		margin: 53px 0 0;
		line-height: 24px;
		text-align: center;
	}

	/* taskbar, only its top edge shows */
	.taskbar {
		display: flex;
		height: 8px;
		flex-shrink: 0;
		overflow: hidden;
		border-top: 1px solid #222;
		box-shadow: inset 0 1px #b09680;
		background: linear-gradient(90deg, #7a5c48, #8f7360 40%, #544332 70%, #8a6a50 85%, #544332);
	}

	.orb {
		width: 32px;
		height: 32px;
		margin: 1px 17px 0 11px;
		border: 1px solid #1e3d5c;
		border-radius: 50%;
		background: #b4d0e2;
	}

	.task {
		width: 160px;
		height: 40px;
		margin-right: 2px;
		padding: 3px 0 0 14px;
		border: 1px solid #222;
		border-radius: 3px;
		background: linear-gradient(90deg, #d8c8be, #b49a84);
		box-shadow: inset 0 0 0 1px #f0e4da;
	}

	.task.bright {
		padding-left: 10px;
		background: linear-gradient(90deg, #f2ece6, #d2c8be);
	}

	.task i {
		display: block;
		width: 28px;
		height: 28px;
		background: linear-gradient(90deg, #3a80e4, #1f56b0);
	}

	.task .round {
		width: 24px;
		height: 24px;
		border-radius: 50%;
		background: #1e96f0;
	}

	time {
		margin: 3px 26px 0 auto;
		color: #fff;
	}

	.peek {
		width: 14px;
		height: 40px;
		border: 1px solid #ddd;
		background: #776a5e;
	}

	.meter {
		position: absolute;
		right: 0;
		top: 803px;
		width: 10px;
		height: 59px;
		padding: 6px 1px 6px 3px;
		border: 1px solid #1d2230;
		border-right: 0;
		border-radius: 4px 0 0 4px;
		background: #4a5266;
	}

	.meter span {
		display: block;
		width: 4px;
		height: 100%;
		background: repeating-linear-gradient(transparent 0 1px, #3c4356 1px 2px), linear-gradient(#20242e 61%, #a8f060 62%, #40f0d0);
	}

	.watermark {
		position: absolute;
		right: 93px;
		bottom: 26px;
		width: 350px;
		height: 180px;
		opacity: 0.72;
		overflow: visible;
		pointer-events: none;
		filter: drop-shadow(0 0 1px rgba(0, 0, 0, 0.5));
	}

	.logo {
		font-family: 'Liberation Sans', sans-serif;
		font-weight: 700;
	}

	.du {
		fill: #646464;
	}

	.cjk {
		font-family: 'Noto Sans CJK SC', sans-serif;
		font-weight: 700;
	}

	.url {
		font-family: 'Open Sans', sans-serif;
	}
</style>
